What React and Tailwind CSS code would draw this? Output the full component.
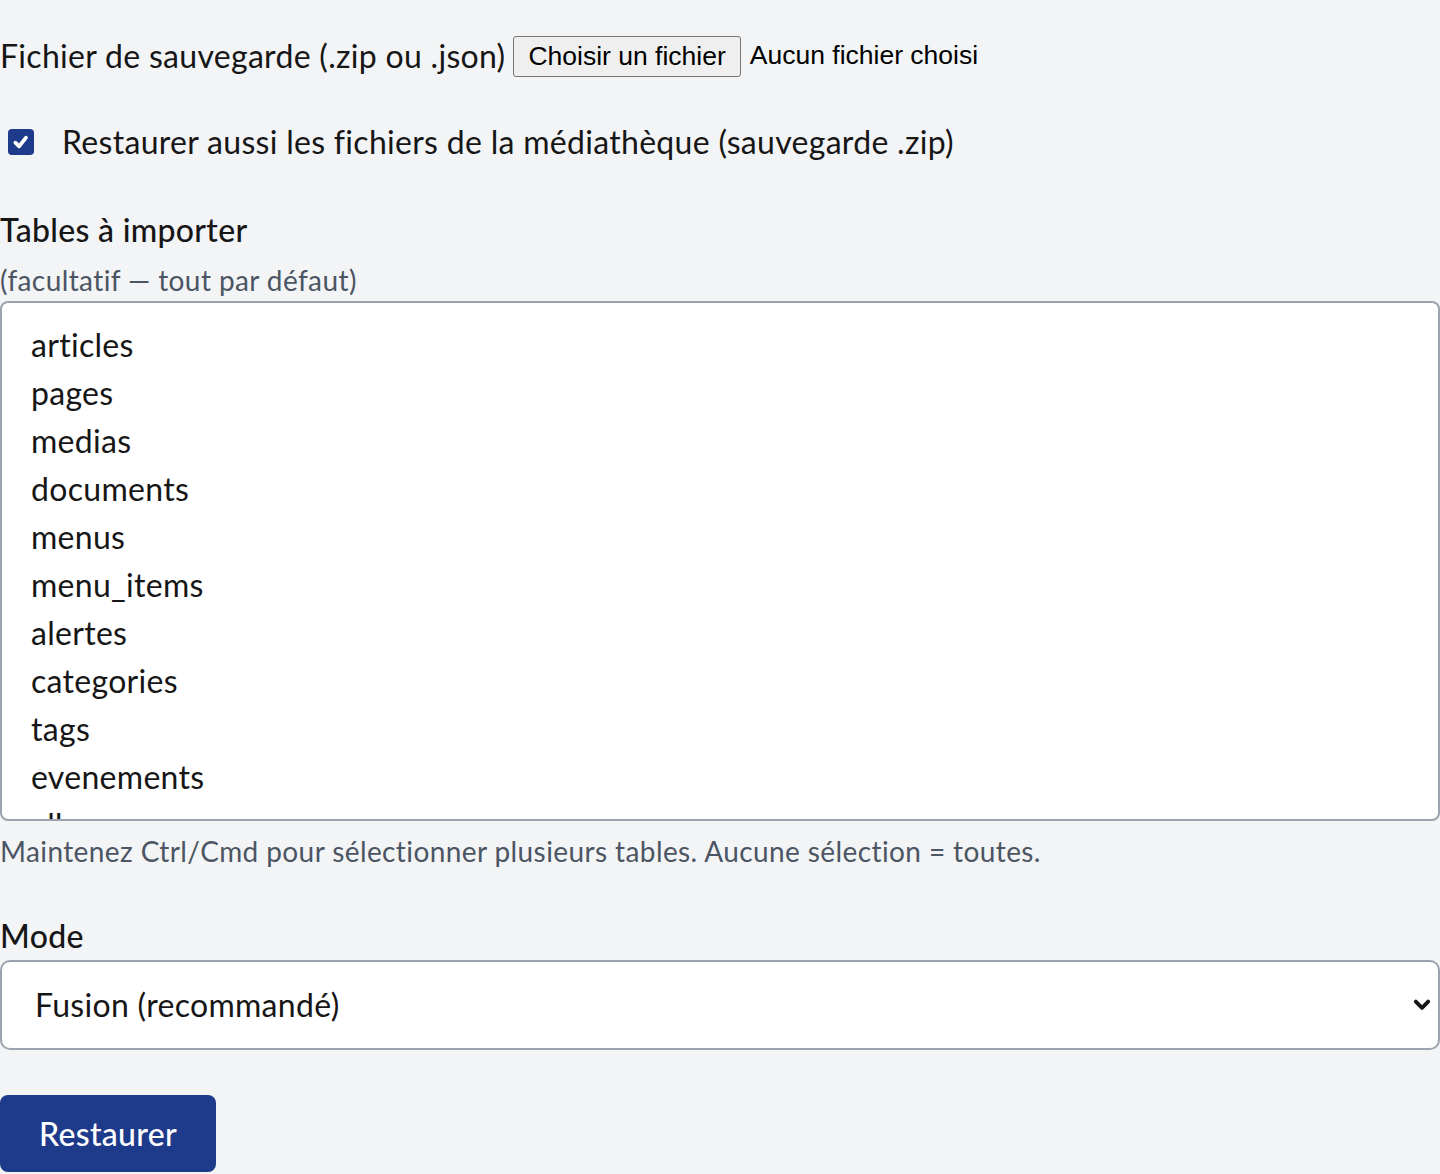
import React from 'react';

const tables = [
  'articles',
  'pages',
  'medias',
  'documents',
  'menus',
  'menu_items',
  'alertes',
  'categories',
  'tags',
  'evenements',
  'albums',
  'parametres',
];

const RestoreForm = () => {
  return (
    <div className="min-h-screen bg-[#f3f4f6] text-[#161616] pt-[32px] pb-[3px] tracking-[0.3px] font-['Lato','Noto_Sans',sans-serif]">
      <div className="flex items-center h-[48px] text-[32px]">
        <span>Fichier de sauvegarde (.zip ou .json)</span>
        <button className="ml-[8px] h-[41px] px-[14px] bg-[#efefef] border border-[#767676] rounded-[3px] text-[26.5px] tracking-normal text-black font-['Liberation_Sans',sans-serif] leading-none">
          Choisir un fichier
        </button>
        <span className="ml-[9px] text-[26.5px] tracking-normal text-black font-['Liberation_Sans',sans-serif]">Aucun fichier choisi</span>
      </div>

      <label className="mt-[38px] flex items-center h-[48px] text-[32px]">
        <span className="ml-[8px] w-[26px] h-[26px] rounded-[4px] bg-[#1e3a8a] flex items-center justify-center">
          <svg viewBox="0 0 16 16" className="w-[20px] h-[20px]" fill="none" stroke="white" strokeWidth="3" strokeLinecap="round" strokeLinejoin="round">
            <path d="M3.5 8.5l3 3 5.5-7" />
          </svg>
        </span>
        <span className="ml-[28px]">Restaurer aussi les fichiers de la médiathèque (sauvegarde .zip)</span>
      </label>

      <div className="mt-[40px] text-[32px] leading-[48px] font-medium">Tables à importer</div>
      <div className="mt-[5px] text-[28px] leading-[42px] tracking-[0.4px] text-[#4b5563]">(facultatif — tout par défaut)</div>

      <div className="h-[520px] overflow-hidden bg-white border-2 border-[#9ca3af] rounded-[8px] pt-[18px] pl-[29px] text-[32px] leading-[48px]">
        {tables.map((t) => (
          <div key={t}>{t}</div>
        ))}
      </div>

      <div className="mt-[9px] text-[28px] leading-[42px] tracking-[0.4px] text-[#4b5563]">
        Maintenez Ctrl/Cmd pour sélectionner plusieurs tables. Aucune sélection = toutes.
      </div>

      <div className="mt-[40px] text-[32px] leading-[48px] font-medium">Mode</div>
      <div className="relative">
        <select className="w-full h-[90px] appearance-none bg-white border-2 border-[#9ca3af] rounded-[10px] pl-[33px] text-[32px] tracking-[0.3px] outline-none">
          <option>Fusion (recommandé)</option>
          <option>Remplacement</option>
        </select>
        <svg viewBox="0 0 16 12" className="absolute right-[9px] top-[38px] w-[18px] h-[14px] pointer-events-none" fill="none" stroke="#161616" strokeWidth="3.4" strokeLinecap="round" strokeLinejoin="round">
          <path d="M2.5 3l5.5 5.5 5.5-5.5" />
        </svg>
      </div>

      <button className="mt-[45px] h-[77px] w-[216px] bg-[#1e3a8a] text-white rounded-[8px] text-[32px] font-medium">
        Restaurer
      </button>
    </div>
  );
};

export default function App() {
  return <RestoreForm />;
}
